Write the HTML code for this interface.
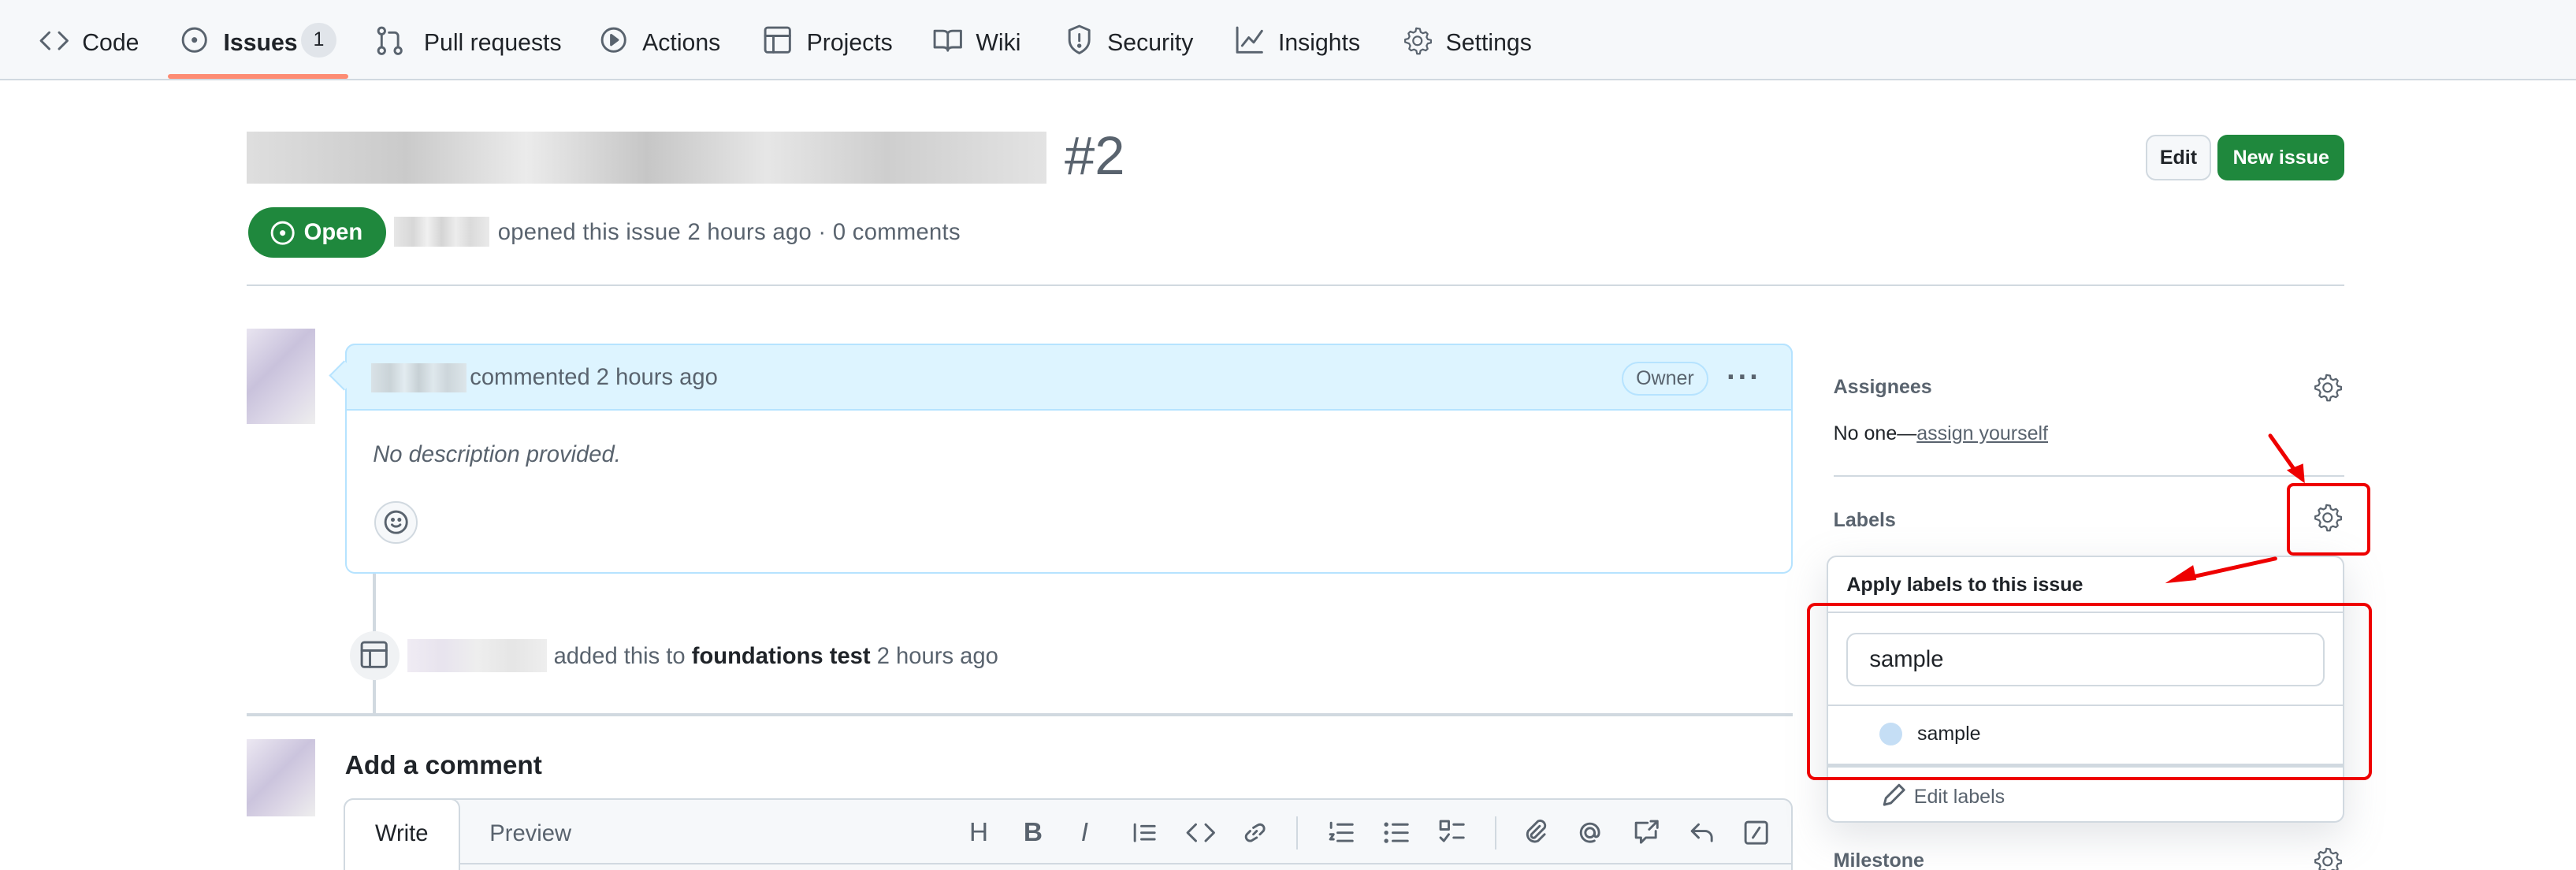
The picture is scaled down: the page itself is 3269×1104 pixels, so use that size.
<!DOCTYPE html>
<html><head><meta charset="utf-8">
<style>
*{box-sizing:border-box;margin:0;padding:0}
html,body{width:3269px;height:1104px;overflow:hidden;background:#fff}
#w{zoom:2.0848;width:1568px;height:530px;position:relative;font-family:"Liberation Sans",sans-serif;color:#1f2328;font-size:14px}
.a{position:absolute;white-space:nowrap}
svg{position:absolute;fill:none;stroke:#59636e;stroke-width:1.4;stroke-linecap:round;stroke-linejoin:round}
.nav{left:0;top:0;width:1568px;height:49px;background:#f6f8fa;border-bottom:1px solid #d1d9e0}
.t{top:18px;font-size:14.5px;color:#1f2328}
.blur{background:linear-gradient(90deg,#d6d6d6,#bdbdbd 20%,#e6e6e6 35%,#b8b8b8 50%,#e0e0e0 65%,#c2c2c2 80%,#dcdcdc)}
.g{color:#59636e}
.gear{width:18px;height:18px}
</style></head><body><div id="w">
<div class="a nav"></div>
<svg style="left:24px;top:17px" width="18" height="16" viewBox="0 0 18 16"><path d="M6 3L1 8l5 5M12 3l5 5-5 5"/></svg>
<div class="a t" style="left:50px">Code</div>
<svg style="left:110px;top:16px" width="17" height="17" viewBox="0 0 17 17"><circle cx="8.5" cy="8.5" r="7"/><circle cx="8.5" cy="8.5" r="1" fill="#59636e"/></svg>
<div class="a t" style="left:136px;font-weight:bold">Issues</div>
<div class="a" style="left:183px;top:14px;width:22px;height:21px;border-radius:11px;background:#e1e5ea;font-size:12px;text-align:center;line-height:21px">1</div>
<div class="a" style="left:102px;top:45px;width:110px;height:3px;background:#fd8c73;border-radius:2px"></div>
<svg style="left:229px;top:16px" width="17" height="18" viewBox="0 0 17 18"><circle cx="3.5" cy="3" r="2"/><circle cx="3.5" cy="15" r="2"/><circle cx="13.5" cy="15" r="2"/><path d="M3.5 5v8M13.5 13V6c0-1-1-2-2-2H8"/></svg>
<div class="a t" style="left:258px">Pull requests</div>
<svg style="left:365px;top:16px" width="17" height="17" viewBox="0 0 17 17"><circle cx="8.5" cy="8.5" r="7"/><path d="M7 5.5l4 3-4 3z" fill="#59636e"/></svg>
<div class="a t" style="left:391px">Actions</div>
<svg style="left:465px;top:16px" width="17" height="17" viewBox="0 0 17 17"><rect x="1" y="1" width="15" height="15" rx="1.5"/><path d="M1 6h15M6 6v10"/></svg>
<div class="a t" style="left:491px">Projects</div>
<svg style="left:568px;top:17px" width="18" height="16" viewBox="0 0 18 16"><path d="M1 2h5c2 0 3 1 3 2v10c0-1-1-2-3-2H1zM17 2h-5c-2 0-3 1-3 2v10c0-1 1-2 3-2h5z"/></svg>
<div class="a t" style="left:594px">Wiki</div>
<svg style="left:649px;top:15px" width="16" height="19" viewBox="0 0 16 19"><path d="M8 1l6 2.5v6c0 4-3 6.5-6 8-3-1.5-6-4-6-8v-6z"/><path d="M8 6v4"/><circle cx="8" cy="13" r=".6" fill="#59636e"/></svg>
<div class="a t" style="left:674px">Security</div>
<svg style="left:752px;top:16px" width="17" height="17" viewBox="0 0 17 17"><path d="M1 1v15h15M4 12l4-5 3 3 5-7"/></svg>
<div class="a t" style="left:778px">Insights</div>
<svg style="left:854px;top:16px" width="18" height="18" viewBox="0 0 24 24"><path d="M12 2l2 .3.6 2.6 1.8 1 2.5-.9 1.4 1.5-.9 2.5 1 1.8 2.6.6v2.2l-2.6.6-1 1.8.9 2.5-1.5 1.4-2.5-.9-1.8 1-.6 2.6h-2.2l-.6-2.6-1.8-1-2.5.9-1.5-1.4.9-2.5-1-1.8L2 13.1v-2.2l2.6-.6 1-1.8-.9-2.5 1.5-1.5 2.5.9 1.8-1L11 1.8z"/><circle cx="12" cy="12" r="3.5"/></svg>
<div class="a t" style="left:880px">Settings</div>

<div class="a blur" style="left:150px;top:80px;width:487px;height:32px;opacity:.8"></div>
<div class="a" style="left:648px;top:76px;font-size:33px;color:#59636e;font-weight:300">#2</div>
<div class="a" style="left:1306px;top:82px;width:40px;height:28px;border:1px solid #d1d9e0;border-radius:6px;background:#f6f8fa;font-size:12px;font-weight:bold;text-align:center;line-height:26px">Edit</div>
<div class="a" style="left:1350px;top:82px;width:77px;height:28px;border-radius:6px;background:#1f883d;color:#fff;font-size:12px;font-weight:bold;text-align:center;line-height:28px">New issue</div>
<div class="a" style="left:151px;top:126px;width:84px;height:31px;border-radius:16px;background:#1f883d;color:#fff;font-weight:bold;font-size:14px;line-height:31px;padding-left:34px">Open</div>
<svg style="left:164px;top:134px;stroke:#fff" width="16" height="16" viewBox="0 0 16 16"><circle cx="8" cy="8" r="6.5"/><circle cx="8" cy="8" r="1" fill="#fff"/></svg>
<div class="a blur" style="left:240px;top:132px;width:58px;height:18px;opacity:.6"></div>
<div class="a g" style="left:303px;top:134px;letter-spacing:.15px">opened this issue 2 hours ago · 0 comments</div>
<div class="a" style="left:150px;top:173px;width:1277px;height:1px;background:#d1d9e0"></div>

<div class="a" style="left:150px;top:200px;width:42px;height:58px;background:linear-gradient(135deg,#e8e4f0,#c9c2dc 40%,#ddd8e8 70%,#eee)"></div>
<div class="a" style="left:210px;top:209px;width:881px;height:140px;border:1px solid #b6e3ff;border-radius:6px"></div>
<div class="a" style="left:210px;top:209px;width:881px;height:41px;background:#ddf4ff;border:1px solid #b6e3ff;border-radius:6px 6px 0 0"></div>
<div class="a" style="left:203px;top:222px;width:13px;height:13px;background:#ddf4ff;border-left:1px solid #b6e3ff;border-bottom:1px solid #b6e3ff;transform:rotate(45deg)"></div>
<div class="a blur" style="left:226px;top:221px;width:58px;height:18px;opacity:.6"></div>
<div class="a g" style="left:286px;top:222px">commented 2 hours ago</div>
<div class="a g" style="left:987px;top:220px;width:53px;height:21px;border:1px solid #b6e3ff;border-radius:11px;font-size:12px;text-align:center;line-height:19px">Owner</div>
<div class="a g" style="left:1051px;top:219px;font-size:18px;font-weight:bold;letter-spacing:1px">···</div>
<div class="a g" style="left:227px;top:269px;font-style:italic">No description provided.</div>
<div class="a" style="left:228px;top:305px;width:26px;height:26px;border:1px solid #d1d9e0;border-radius:13px;background:#f6f8fa"></div>
<svg style="left:233px;top:310px" width="16" height="16" viewBox="0 0 16 16"><circle cx="8" cy="8" r="6.5"/><path d="M5.5 9.5c1.2 1.5 3.8 1.5 5 0"/><circle cx="6" cy="6.5" r=".5" fill="#59636e"/><circle cx="10" cy="6.5" r=".5" fill="#59636e"/></svg>
<div class="a" style="left:227px;top:349px;width:2px;height:86px;background:#d1d9e0"></div>
<div class="a" style="left:213px;top:384px;width:30px;height:30px;border-radius:15px;background:#f0f2f4"></div>
<svg style="left:219px;top:390px" width="17" height="17" viewBox="0 0 17 17"><rect x="1" y="1" width="15" height="15" rx="1.5"/><path d="M1 6h15M6 6v10"/></svg>
<div class="a blur" style="left:248px;top:389px;width:85px;height:20px;opacity:.5;background:linear-gradient(90deg,#e0d8e8,#d0c8dc,#ddd,#ccc,#ddd)"></div>
<div class="a g" style="left:337px;top:392px">added this to <b style="color:#1f2328">foundations test</b> 2 hours ago</div>
<div class="a" style="left:150px;top:434px;width:941px;height:2px;background:#d1d9e0"></div>
<div class="a" style="left:150px;top:450px;width:42px;height:47px;background:linear-gradient(135deg,#ece8f2,#cbc4dd 45%,#dcd6e6 70%,#eee)"></div>
<div class="a" style="left:210px;top:457px;font-size:16px;font-weight:bold">Add a comment</div>
<div class="a" style="left:209px;top:486px;width:882px;height:50px;border:1px solid #d1d9e0;border-radius:6px;background:#f6f8fa"></div>
<div class="a" style="left:209px;top:486px;width:71px;height:50px;border:1px solid #d1d9e0;border-bottom:none;border-radius:6px 6px 0 0;background:#fff;line-height:42px;text-align:center">Write</div>
<div class="a g" style="left:298px;top:500px">Preview</div>
<div class="a" style="left:280px;top:525px;width:811px;height:1px;background:#d1d9e0"></div>
<div class="a g" style="left:590px;top:498px;font-size:16px">
<span style="position:absolute;left:0">H</span><span style="position:absolute;left:33px;font-weight:bold">B</span><span style="position:absolute;left:68px;font-style:italic">I</span></div>
<svg style="left:689px;top:499px" width="16" height="16" viewBox="0 0 16 16"><path d="M2 3v10M6 4h8M6 8h8M6 12h8"/></svg>
<svg style="left:722px;top:499px" width="18" height="16" viewBox="0 0 18 16"><path d="M6 3L1 8l5 5M12 3l5 5-5 5"/></svg>
<svg style="left:756px;top:499px" width="16" height="16" viewBox="0 0 16 16"><path d="M7 9l2-2M5 7L3 9a2.5 2.5 0 003.5 3.5L9 11M11 9l2-2a2.5 2.5 0 00-3.5-3.5L7 5"/></svg>
<div class="a" style="left:789px;top:497px;width:1px;height:20px;background:#d1d9e0"></div>
<svg style="left:808px;top:499px" width="16" height="16" viewBox="0 0 16 16"><path d="M6 3h9M6 8h9M6 13h9M2 2v3M1.5 9h2l-2 3h2"/></svg>
<svg style="left:842px;top:499px" width="16" height="16" viewBox="0 0 16 16"><path d="M6 3h9M6 8h9M6 13h9"/><circle cx="2" cy="3" r=".6" fill="#59636e"/><circle cx="2" cy="8" r=".6" fill="#59636e"/><circle cx="2" cy="13" r=".6" fill="#59636e"/></svg>
<svg style="left:876px;top:499px" width="16" height="16" viewBox="0 0 16 16"><rect x="1" y="1" width="5" height="5"/><path d="M9 3h6M9 11h6M1 11l2 2 3-4"/></svg>
<div class="a" style="left:910px;top:497px;width:1px;height:20px;background:#d1d9e0"></div>
<svg style="left:927px;top:499px" width="16" height="16" viewBox="0 0 16 16"><path d="M10 4l-5 5a1.5 1.5 0 002 2l6-6a3 3 0 00-4-4L3 7a4.5 4.5 0 006 6l4-4"/></svg>
<svg style="left:960px;top:499px" width="16" height="16" viewBox="0 0 16 16"><circle cx="8" cy="8" r="2.8"/><path d="M10.8 8v1.5c0 1.5 2.7 1.5 2.7-1.5A5.5 5.5 0 108 13.5c1 0 2-.2 2.7-.6"/></svg>
<svg style="left:994px;top:499px" width="16" height="16" viewBox="0 0 16 16"><path d="M9 2H2v9h3v3l3-3h6V7M11 1h4v4M15 1l-5 5"/></svg>
<svg style="left:1028px;top:499px" width="16" height="16" viewBox="0 0 16 16"><path d="M6 3L2 7l4 4M2 7h8a4 4 0 014 4v2"/></svg>
<svg style="left:1061px;top:499px" width="16" height="16" viewBox="0 0 16 16"><rect x="1.5" y="1.5" width="13" height="13" rx="1.5"/><path d="M10 5l-4 6"/></svg>

<div class="a g" style="left:1116px;top:229px;font-size:12px;font-weight:bold">Assignees</div>
<svg class="gear" style="left:1408px;top:227px" viewBox="0 0 24 24"><path d="M12 2l2 .3.6 2.6 1.8 1 2.5-.9 1.4 1.5-.9 2.5 1 1.8 2.6.6v2.2l-2.6.6-1 1.8.9 2.5-1.5 1.4-2.5-.9-1.8 1-.6 2.6h-2.2l-.6-2.6-1.8-1-2.5.9-1.5-1.4.9-2.5-1-1.8L2 13.1v-2.2l2.6-.6 1-1.8-.9-2.5 1.5-1.5 2.5.9 1.8-1L11 1.8z"/><circle cx="12" cy="12" r="3.5"/></svg>
<div class="a" style="left:1116px;top:257px;font-size:12px">No one—<span style="color:#59636e;text-decoration:underline">assign yourself</span></div>
<div class="a" style="left:1116px;top:289px;width:311px;height:1px;background:#d1d9e0"></div>
<div class="a g" style="left:1116px;top:310px;font-size:12px;font-weight:bold">Labels</div>
<svg class="gear" style="left:1408px;top:306px" viewBox="0 0 24 24"><path d="M12 2l2 .3.6 2.6 1.8 1 2.5-.9 1.4 1.5-.9 2.5 1 1.8 2.6.6v2.2l-2.6.6-1 1.8.9 2.5-1.5 1.4-2.5-.9-1.8 1-.6 2.6h-2.2l-.6-2.6-1.8-1-2.5.9-1.5-1.4.9-2.5-1-1.8L2 13.1v-2.2l2.6-.6 1-1.8-.9-2.5 1.5-1.5 2.5.9 1.8-1L11 1.8z"/><circle cx="12" cy="12" r="3.5"/></svg>
<div class="a" style="left:1112px;top:338px;width:315px;height:163px;border:1px solid #d1d9e0;border-radius:6px;background:#fff;box-shadow:0 8px 24px rgba(140,149,159,.25)"></div>
<div class="a" style="left:1124px;top:349px;font-size:12px;font-weight:bold">Apply labels to this issue</div>
<div class="a" style="left:1113px;top:372px;width:313px;height:1px;background:#d1d9e0"></div>
<div class="a" style="left:1124px;top:385px;width:291px;height:33px;border:1px solid #d1d9e0;border-radius:6px;font-size:14px;line-height:31px;padding-left:13px">sample</div>
<div class="a" style="left:1113px;top:429px;width:313px;height:1px;background:#d1d9e0"></div>
<div class="a" style="left:1144px;top:440px;width:14px;height:14px;border-radius:7px;background:#c5def5"></div>
<div class="a" style="left:1167px;top:440px;font-size:12px">sample</div>
<div class="a" style="left:1113px;top:465px;width:313px;height:2px;background:#d1d9e0"></div>
<svg style="left:1145px;top:476px" width="16" height="16" viewBox="0 0 16 16"><path d="M11 2l3 3-8 8-4 1 1-4z"/></svg>
<div class="a g" style="left:1165px;top:478px;font-size:12px">Edit labels</div>
<div class="a g" style="left:1116px;top:517px;font-size:12px;font-weight:bold">Milestone</div>
<svg class="gear" style="left:1408px;top:515px" viewBox="0 0 24 24"><path d="M12 2l2 .3.6 2.6 1.8 1 2.5-.9 1.4 1.5-.9 2.5 1 1.8 2.6.6v2.2l-2.6.6-1 1.8.9 2.5-1.5 1.4-2.5-.9-1.8 1-.6 2.6h-2.2l-.6-2.6-1.8-1-2.5.9-1.5-1.4.9-2.5-1-1.8L2 13.1v-2.2l2.6-.6 1-1.8-.9-2.5 1.5-1.5 2.5.9 1.8-1L11 1.8z"/><circle cx="12" cy="12" r="3.5"/></svg>

<div class="a" style="left:1392px;top:294px;width:51px;height:44px;border:2px solid #e00;border-radius:4px"></div>
<div class="a" style="left:1100px;top:367px;width:344px;height:108px;border:2px solid #e00;border-radius:5px"></div>
<svg style="left:1370px;top:255px;stroke:none" width="50" height="45" viewBox="0 0 50 45"><path d="M12 10l17 24" stroke="#e00" stroke-width="2.4"/><path d="M33 39l-11-8 10-4z" fill="#e00"/></svg>
<svg style="left:1310px;top:330px;stroke:none" width="85" height="35" viewBox="0 0 85 35"><path d="M75 10L25 21" stroke="#e00" stroke-width="2.4"/><path d="M8 25l17-11 2 9z" fill="#e00"/></svg>
</div></body></html>
